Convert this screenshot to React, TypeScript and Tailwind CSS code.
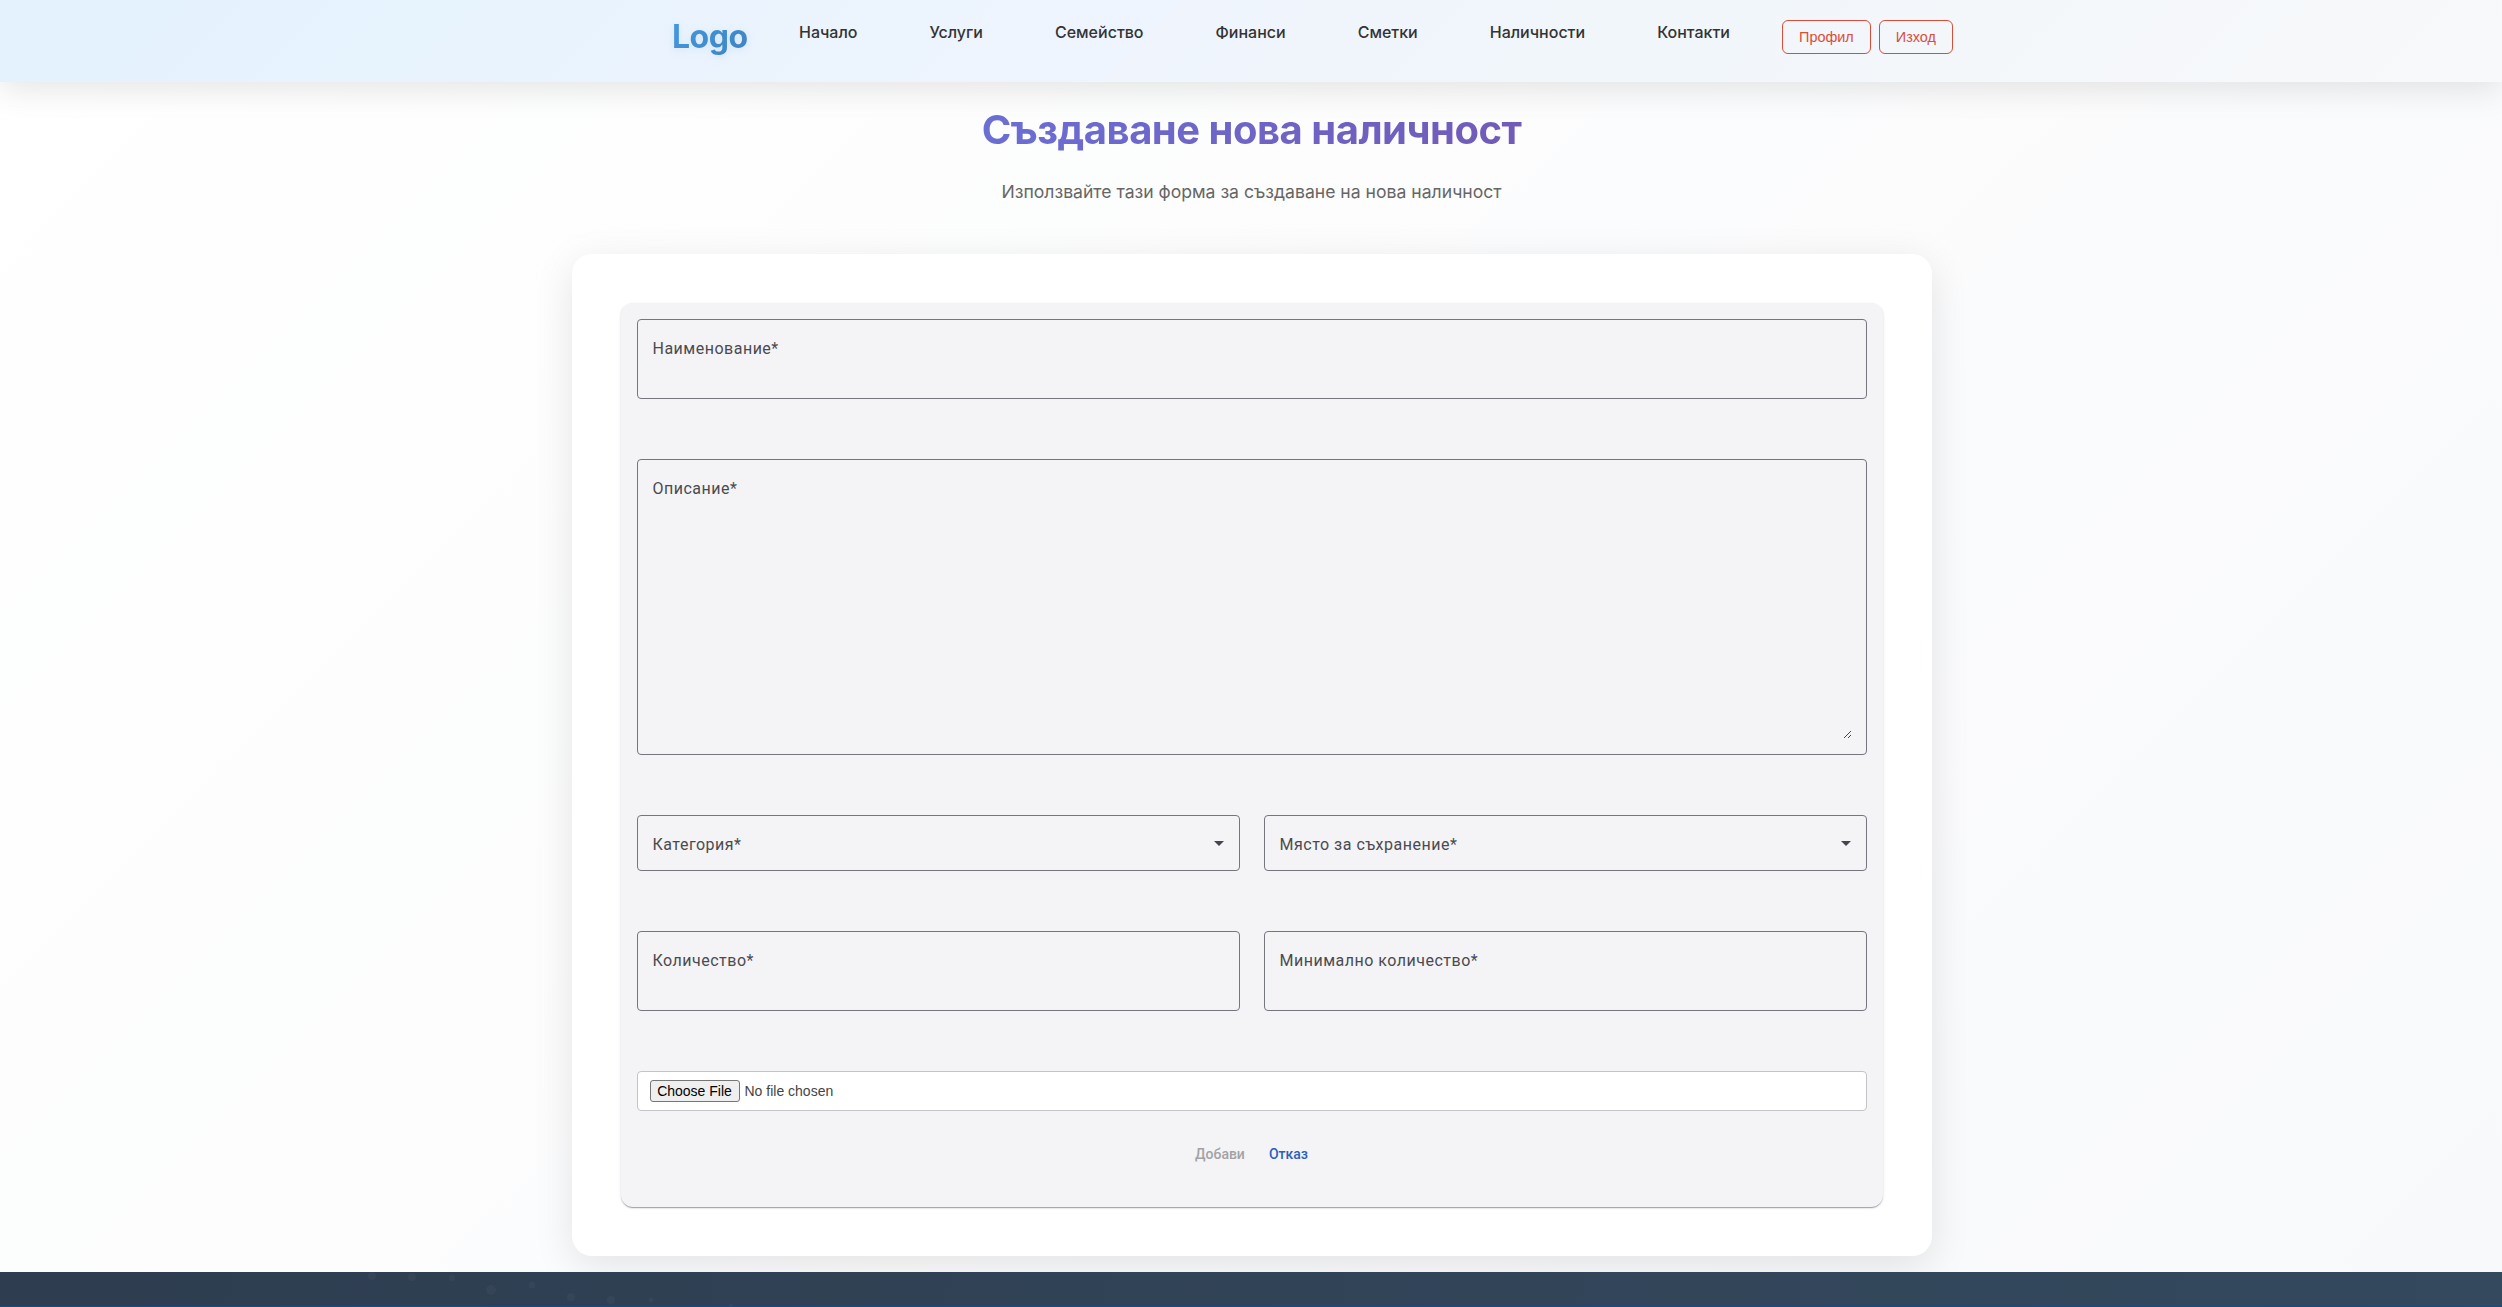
import React from "react";

const navItems = ["Начало", "Услуги", "Семейство", "Финанси", "Сметки", "Наличности", "Контакти"];

const particles = [
  { x: 372, y: 4, r: 4 },
  { x: 412, y: 5, r: 4 },
  { x: 452, y: 6, r: 3 },
  { x: 491, y: 18, r: 5 },
  { x: 532, y: 13, r: 3.5 },
  { x: 571, y: 25, r: 4 },
  { x: 611, y: 28, r: 4 },
  { x: 651, y: 28, r: 2.5 },
  { x: 731, y: 34, r: 2.5 },
];

function Field({ label, className, children }: { label: string; className: string; children?: React.ReactNode }) {
  return (
    <div className={`flex justify-between rounded-[4px] border border-[#75757e] px-[15px] ${className}`}>
      <label className="pt-[17px] font-['Roboto'] text-base leading-6 tracking-[0.5px] text-[#4a4b50]">{label}*</label>
      {children}
    </div>
  );
}

function Caret() {
  return (
    <svg viewBox="0 0 10 5" className="mt-[25px] h-[5px] w-[10px] fill-[#44464e]">
      <path d="M0 0h10L5 5z" />
    </svg>
  );
}

function Grip() {
  return (
    <svg viewBox="0 0 8 8" className="mb-[15px] h-2 w-2 self-end stroke-[#44474e]" shapeRendering="crispEdges">
      <path d="M0.5 7.5L7.5 0.5M4.5 7.5L7.5 4.5" />
    </svg>
  );
}

export default function App() {
  return (
    <div className="flex h-[1307px] flex-col overflow-hidden bg-[linear-gradient(135deg,#ffffff_0%,#f8f9fb_100%)] font-['Inter',sans-serif]">
      <header className="relative z-10 flex h-[82px] shrink-0 items-start bg-[linear-gradient(135deg,#e3f2fd_0%,#f0f5fd_50%,#f1f6fa_65%,#f8f9fa_100%)] pl-[672px] shadow-[0_8px_32px_rgba(0,0,0,0.1)]">
        <div className="mt-[17px] w-[91px] text-[32px] leading-[40px] font-bold tracking-[-0.5px]">
          <span className="bg-[linear-gradient(135deg,#4299e1,#3f83c1)] bg-clip-text text-transparent drop-shadow-[0_2px_4px_rgba(66,140,210,0.15)]">Logo</span>
        </div>
        <nav className="flex pt-5 text-base leading-6 font-medium text-[#333]">
          {navItems.map((item) => (
            <a key={item} className="px-9">{item}</a>
          ))}
        </nav>
        <div className="mt-5 ml-4 flex gap-2 font-['Liberation_Sans',sans-serif] text-[14.4px] text-[#dd4b39]">
          <button className="h-[34px] w-[89px] rounded-[6px] border border-[#dd4b39] pt-px">Профил</button>
          <button className="h-[34px] w-[74px] rounded-[6px] border border-[#dd4b39] pt-px">Изход</button>
        </div>
      </header>

      <main className="ml-[571.5px] flex h-[1190px] w-[1360px] shrink-0 flex-col">
        <h1 className="mt-[24px] bg-[linear-gradient(135deg,#667eea_0%,#764ba2_100%)] bg-clip-text text-center text-[40px] leading-[48px] font-bold tracking-[-0.5px] text-transparent">Създаване нова наличност</h1>
        <p className="mt-[24px] text-center text-[17.6px] leading-[28px] text-[#666]">Използвайте тази форма за създаване на нова наличност</p>

        <section className="mt-[48px] h-[1002px] rounded-[20px] bg-white px-12 py-[49px] shadow-[0_10px_40px_rgba(0,0,0,0.1)]">
          <form className="mx-px flex h-[904px] flex-col rounded-[12px] bg-[#f4f3f6] px-4 pt-4 shadow-[0_2px_1px_-1px_rgba(0,0,0,0.2),0_1px_1px_rgba(0,0,0,0.14),0_1px_3px_rgba(0,0,0,0.12)]">
            <Field label="Наименование" className="h-20" />
            <Field label="Описание" className="mt-[60px] h-[296px]"><Grip /></Field>
            <div className="mt-[60px] grid grid-cols-2 gap-6">
              <Field label="Категория" className="h-14"><Caret /></Field>
              <Field label="Място за съхранение" className="h-14"><Caret /></Field>
            </div>
            <div className="mt-[60px] grid grid-cols-2 gap-6">
              <Field label="Количество" className="h-20" />
              <Field label="Минимално количество" className="h-20" />
            </div>
            <div className="mt-[60px] flex h-10 items-center rounded-[4px] border border-[#c4c4c8] bg-white px-3 font-['Liberation_Sans',sans-serif] text-[14px] text-[#444]">
              <span className="flex h-[22px] w-[90px] items-center justify-center rounded-[3px] border border-[#767676] bg-[#efefef] whitespace-nowrap text-black">Choose File</span>
              <span className="ml-[5px]">No file chosen</span>
            </div>
            <div className="mt-[33px] flex justify-center gap-6 font-['Roboto'] text-sm leading-5 font-medium">
              <button className="text-[#a2a2a5]">Добави</button>
              <button className="text-[#2b60c0]">Отказ</button>
            </div>
          </form>
        </section>
      </main>

      <footer className="relative z-10 h-[35px] shrink-0 border-b border-[#1a4a80] bg-[linear-gradient(100deg,#2e3d50,#34495e)]">
        <svg viewBox="0 0 800 34" className="h-[34px] w-[800px] fill-white/[0.03]">
          {particles.map((p) => (
            <circle key={p.x} cx={p.x} cy={p.y} r={p.r} />
          ))}
        </svg>
      </footer>
    </div>
  );
}
